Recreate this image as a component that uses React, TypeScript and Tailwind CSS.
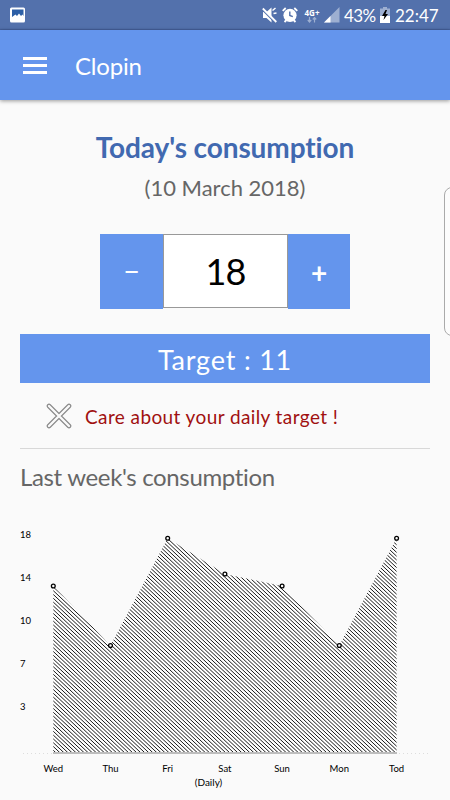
import { useState } from "react";

const points = [
  { label: "Wed", x: 53.3, y: 66 },
  { label: "Thu", x: 110.5, y: 125.5 },
  { label: "Fri", x: 167.7, y: 18.3 },
  { label: "Sat", x: 224.9, y: 54 },
  { label: "Sun", x: 282.1, y: 66 },
  { label: "Mon", x: 339.3, y: 125.5 },
  { label: "Tod", x: 396.6, y: 18.3 },
];

const ticks = [
  { value: 18, y: 18 },
  { value: 14, y: 61 },
  { value: 10, y: 104 },
  { value: 7, y: 147 },
  { value: 3, y: 190 },
];

const BASE = 233;
const STEP = 3.8;
const SLOPE = 0.94;
const hatch = Array.from({ length: 150 }, (_, i) => -320 + i * STEP);

function StatusBar() {
  return (
    <div className="flex h-[30px] items-center bg-[#5371ac] pl-2.5 pr-[11px] text-white shadow-[inset_0_-2px_1px_-1px_#44609b]">
      <svg width="16" height="16" viewBox="0 0 16 16">
        <rect x="0" y="0.5" width="15" height="15" rx="1.5" fill="#fff" />
        <path d="M2 2.500h11.500v6.500l-1-1.500-1.500 1.500-2-2.500-2 2.500-1.500-1.500L2 10z" fill="#2c5fa6" />
      </svg>
      <div className="ml-auto flex items-center">
        <svg width="16" height="16" viewBox="0 0 16 16" fill="#fff">
          <path d="M1 5h3.500L9.500 0.500v15L4.500 11H1z" />
          <path d="M10.500 3.500l3-2.500M11.500 6.500l3-.5" stroke="#fff" strokeWidth="1.500" />
          <path d="M0 2.500l13 13" stroke="#5371ac" strokeWidth="1.400" />
          <path d="M0.800 1.500l13.500 13.500" stroke="#fff" strokeWidth="1.800" />
        </svg>
        <svg className="ml-1" width="16" height="16" viewBox="0 0 16 16">
          <circle cx="8" cy="8.300" r="6.600" fill="#fff" />
          <path d="M.7 3.800l3-2.800M15.300 3.800l-3-2.800M2.500 15l2-2M13.500 15l-2-2" stroke="#fff" strokeWidth="1.800" />
          <path d="M7.800 4.500v4l3 1.200" fill="none" stroke="#5371ac" strokeWidth="1.400" />
        </svg>
        <div className="ml-1.5 flex w-4 flex-col items-center">
          <span className="font-['Open_Sans',sans-serif] text-[8px] font-bold leading-[9px]">4G+</span>
          <svg width="10" height="6" viewBox="0 0 10 6" fill="none" stroke="#9dafd1" strokeWidth="1.200">
            <path d="M2.500 0v4.500M.8 3l1.700 2 1.700-2M7.500 5.500V1M5.800 2.500l1.700-2 1.700 2" />
          </svg>
        </div>
        <svg className="ml-1" width="16" height="16" viewBox="0 0 16 16">
          <path d="M0 15.500L15.500 0v15.500z" fill="#9dafd1" />
          <path d="M0 15.500l6.500-6.500v6.500z" fill="#fff" />
        </svg>
        <span className="ml-1 w-[34px] whitespace-nowrap text-[17px] leading-none tracking-[-0.6px]">43%</span>
        <svg className="ml-0.5" width="10" height="16" viewBox="0 0 10 16">
          <path d="M3 0h4v1.500h3V9H0V1.500h3z" fill="#9dafd1" />
          <path d="M0 9h10v7H0z" fill="#fff" />
          <path d="M5.500 3L2 9h2.500L3.500 13 8 7H5.500L7 3z" fill="#000" />
        </svg>
        <span className="ml-[5px] w-11 whitespace-nowrap text-[17px] leading-none">22:47</span>
      </div>
    </div>
  );
}

function Chart() {
  const area = `M${points[0].x} ${BASE} ${points.map((p) => `L${p.x} ${p.y}`).join(" ")} V${BASE}Z`;

  return (
    <svg className="block" width="450" height="280" viewBox="0 0 450 280">
      <defs>
        <clipPath id="area">
          <path d={area} />
        </clipPath>
      </defs>
      <path d={area} fill="#fff" />
      <g clipPath="url(#area)" stroke="#000" strokeWidth="0.9">
        {hatch.map((y) => (
          <line key={y} x1="50" y1={y} x2="400" y2={y + 350 * SLOPE} />
        ))}
      </g>
      <path d="M23 233.500H430" stroke="#ddd" strokeDasharray="1 3" />
      <path d="M53 233H397" stroke="#bdbdbd" strokeWidth="2" />
      {points.map((p) => (
        <g key={p.label}>
          <circle cx={p.x} cy={p.y} r="1.900" fill="#fafafa" stroke="#000" strokeWidth="1.300" />
          <text x={p.x} y="252" textAnchor="middle" fontSize="9.500">
            {p.label}
          </text>
        </g>
      ))}
      {ticks.map((t) => (
        <text key={t.value} x="20" y={t.y} fontSize="9.500">
          {t.value}
        </text>
      ))}
      <text x="208.500" y="266" textAnchor="middle" fontSize="10">
        (Daily)
      </text>
    </svg>
  );
}

export default function App() {
  const [count, setCount] = useState(18);

  return (
    <div className="relative h-[800px] w-[450px] overflow-hidden bg-[#fafafa] font-[Lato,sans-serif] [font-variant-ligatures:none]">
      <StatusBar />
      <header className="flex h-[70px] items-center bg-[#6495ed] pl-[23px] text-white shadow-[0_1px_4px_rgba(0,0,0,0.4)]">
        <button className="flex w-6 flex-col gap-1" aria-label="Menu">
          <span className="h-[3px] bg-white" />
          <span className="h-[3px] bg-white" />
          <span className="h-[3px] bg-white" />
        </button>
        <h1 className="ml-7 pt-0.5 text-2xl tracking-[-0.2px]">Clopin</h1>
      </header>

      <main>
        <h2 className="mt-7 text-center text-[28px] font-bold leading-[38px] tracking-[-0.1px] text-[#4169b0]">
          Today's consumption
        </h2>
        <p className="mt-1.5 text-center text-[22px] leading-8 text-[#666]">(10 March 2018)</p>

        <div className="mx-auto mt-[30px] flex h-[75px] w-[250px] text-white">
          <button
            className="w-[63px] bg-[#6495ed] pb-0.5 text-[28px]"
            onClick={() => setCount(count - 1)}
          >
            −
          </button>
          <div className="flex h-[74px] w-[125px] items-center justify-center border border-[#999] bg-white text-[36px] tracking-[-1px] text-black">
            {count}
          </div>
          <button className="flex-1 bg-[#6495ed] text-[28px] font-bold" onClick={() => setCount(count + 1)}>
            +
          </button>
        </div>

        <div className="mx-5 mt-[25px] flex h-[49px] items-center justify-center bg-[#6495ed] pt-1 text-[27px] tracking-[0.8px] text-white">
          Target : 11
        </div>

        <div className="mx-5 flex h-[66px] items-center border-b border-[#d8d8d8] pl-[26px]">
          <svg width="26" height="26" viewBox="0 0 26 26" strokeLinecap="round">
            <path d="M3 3l20 20M23 3L3 23" stroke="#888" strokeWidth="4.600" />
            <path d="M3 3l20 20M23 3L3 23" stroke="#fafafa" strokeWidth="2.400" />
          </svg>
          <p className="ml-[13px] pt-[3px] text-[19px] tracking-[0.4px] text-[#a01010]">
            Care about your daily target !
          </p>
        </div>

        <h3 className="ml-5 mt-2.5 text-2xl leading-9 tracking-[-0.35px] text-[#666]">Last week's consumption</h3>
        <div className="mt-[25px]">
          <Chart />
        </div>
      </main>

      <div className="absolute left-[444px] top-[187px] h-[149px] w-5 rounded-lg border border-[#aaa] bg-[#fcfcfc]" />
    </div>
  );
}
